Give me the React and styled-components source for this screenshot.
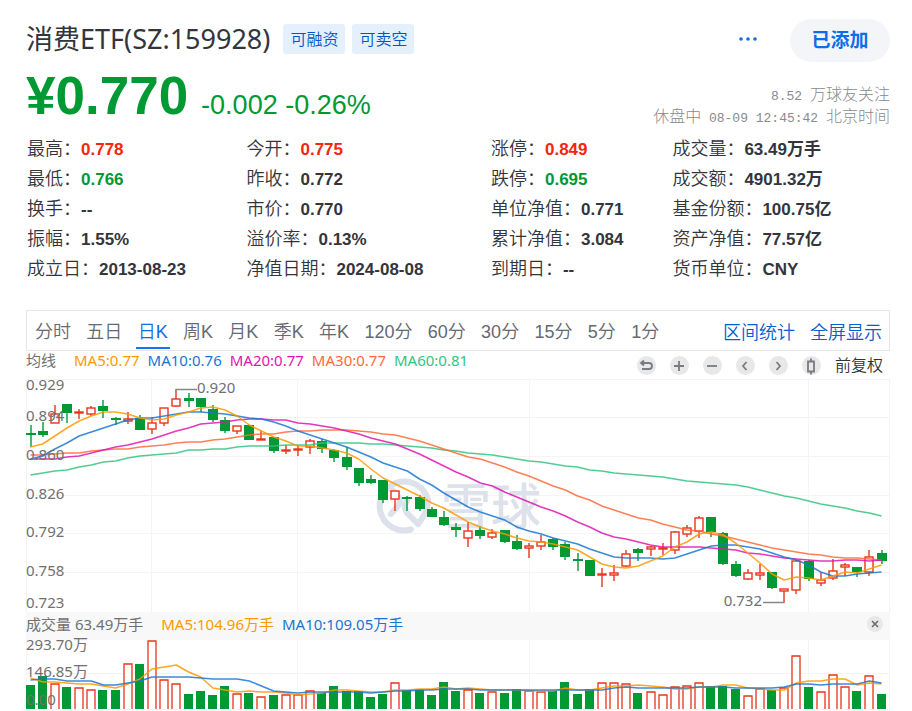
import { useState } from "react";
import styled, { createGlobalStyle } from "styled-components";

const GlobalStyle = createGlobalStyle`
  * {
    box-sizing: border-box;
  }
  body {
    margin: 0;
    background: #fff;
    color: #33353c;
    font-family: "Liberation Sans", "Noto Sans CJK SC", sans-serif;
  }
  button {
    border: none;
    background: none;
    padding: 0;
    font: inherit;
    color: inherit;
    cursor: pointer;
  }
`;

const uiFont = `"Noto Sans", "Noto Sans CJK SC", sans-serif`;
const UP = "#e8341a";
const DOWN = "#093";

const Page = styled.main`
  padding: 19px 22px 0 26px;
`;

const Header = styled.header`
  display: flex;
  align-items: center;
  height: 43px;
`;
const Title = styled.h1`
  margin: 0 13px 4px 0;
  font: 400 27px/36px ${uiFont};
  white-space: nowrap;
`;
const Tag = styled.a`
  margin: 0 7px 3px 0;
  padding: 0 7px;
  border-radius: 3px;
  background: #e4f0fb;
  color: #0055c4;
  font: 350 16px/30px ${uiFont};
  text-decoration: none;
  white-space: nowrap;
`;
const MoreButton = styled.button`
  display: flex;
  margin: 0 32px 4px auto;
`;
const FollowButton = styled.button`
  width: 100px;
  height: 43px;
  padding-bottom: 4px;
  border-radius: 22px;
  background: #f4f5f9;
  color: #0d6ee8;
  font-size: 19px;
  font-weight: 700;
`;

const PriceRow = styled.section`
  display: flex;
  justify-content: space-between;
  align-items: flex-end;
  height: 66px;
`;
const Price = styled.div`
  color: ${DOWN};
  font-size: 27px;
  line-height: 46px;
  white-space: nowrap;
  strong {
    margin-right: 13px;
    font-size: 53px;
  }
`;
const Meta = styled.div`
  padding-bottom: 2px;
  color: #8a8a8a;
  font: 300 16px/22px "Noto Sans CJK SC", sans-serif;
  text-align: right;
  span {
    font: 13px/1 "Liberation Mono", monospace;
  }
`;

const QuoteTable = styled.table`
  width: 100%;
  margin: 6px 0 26px;
  border-collapse: collapse;
  table-layout: fixed;
`;
const QuoteCell = styled.td`
  width: ${({ $width }) => $width};
  height: 30px;
  padding: 0 0 0 1px;
  font-size: 18px;
  font-weight: 350;
  line-height: 30px;
  white-space: nowrap;
  strong {
    color: ${({ $color }) => $color || "inherit"};
    font-size: 17px;
    font-weight: 700;
    line-height: 1;
  }
`;

const Tabs = styled.nav`
  display: flex;
  align-items: center;
  justify-content: space-between;
  height: 41px;
  padding: 0 7px 0 6px;
  border: 1px solid #e6e6e8;
`;
const PeriodList = styled.div`
  display: flex;
  justify-content: space-between;
  flex: 0 0 74%;
`;
const Tab = styled.button`
  height: 37px;
  padding: 0 2px;
  border-bottom: 2px solid ${({ $active }) => ($active ? "#1a76e8" : "transparent")};
  color: ${({ $active }) => ($active ? "#0d6ee8" : "#666970")};
  font-size: 18px;
  font-weight: 350;
  white-space: nowrap;
`;
const TabLinks = styled.div`
  display: flex;
  gap: 15px;
  a {
    color: #0060d0;
    font-size: 18px;
    font-weight: 350;
    text-decoration: none;
    white-space: nowrap;
  }
`;

const Toolbar = styled.div`
  display: flex;
  justify-content: space-between;
  height: 21px;
`;
const Legend = styled.div`
  display: flex;
  gap: 8px;
  color: #707070;
  font: 400 15px/18px ${uiFont};
  white-space: nowrap;
`;
const LegendTitle = styled.span`
  margin-right: 10px;
`;
const LegendItem = styled.span`
  color: ${({ $color }) => $color};
`;
const Tools = styled.div`
  display: flex;
  align-items: flex-start;
  gap: 14px;
  padding: 5px 7px 0 0;
`;
const RoundButton = styled.button`
  display: flex;
  align-items: center;
  justify-content: center;
  width: ${({ $size }) => $size || 19}px;
  height: ${({ $size }) => $size || 19}px;
  border-radius: 50%;
  background: #e8e8e8;
`;
const AdjustButton = styled.button`
  color: #333;
  font-size: 16px;
  font-weight: 350;
  line-height: 20px;
  white-space: nowrap;
`;

const Chart = styled.svg`
  display: block;
  width: 100%;
  height: auto;
  overflow: visible;
  text {
    fill: #707070;
    font: 400 15px ${uiFont};
  }
  .brand {
    fill: #dde1ea;
    font-size: 50px;
    font-weight: 500;
  }
`;
const VolumeBar = styled.div`
  display: flex;
  align-items: center;
  justify-content: space-between;
  height: 28px;
  padding: 0 7px 4px 0;
  background: #f8f8f8;
`;

const quotes = [
  [["最高", "0.778", "#f5260a"], ["今开", "0.775", "#f5260a"], ["涨停", "0.849", "#f5260a"], ["成交量", "63.49万手"]],
  [["最低", "0.766", DOWN], ["昨收", "0.772"], ["跌停", "0.695", DOWN], ["成交额", "4901.32万"]],
  [["换手", "--"], ["市价", "0.770"], ["单位净值", "0.771"], ["基金份额", "100.75亿"]],
  [["振幅", "1.55%"], ["溢价率", "0.13%"], ["累计净值", "3.084"], ["资产净值", "77.57亿"]],
  [["成立日", "2013-08-23"], ["净值日期", "2024-08-08"], ["到期日", "--"], ["货币单位", "CNY"]],
];
const columnWidths = ["25.4%", "28.3%", "21%", "25.3%"];

const periods = ["分时", "五日", "日K", "周K", "月K", "季K", "年K", "120分", "60分", "30分", "15分", "5分", "1分"];

const colors = {
  ma5: "#f90",
  ma10: "#1a75d1",
  ma20: "#e014b0",
  ma30: "#ff6a3a",
  ma60: "#33c480",
};

// direction, body top, body bottom, high, low (chart units)
const candles = [
  ["d", 433, 435, 425, 447], ["d", 431, 435, 422, 437], ["u", 414, 423, 405, 423], ["d", 404, 413, 404, 423],
  ["u", 412, 413, 409, 419], ["u", 408, 414, 406, 416], ["d", 406, 411, 400, 418], ["d", 418, 420, 417, 425],
  ["u", 419, 421, 412, 424], ["d", 418, 430, 415, 430], ["u", 423, 429, 417, 434], ["u", 408, 423, 408, 426],
  ["u", 399, 406, 389, 407], ["d", 398, 401, 393, 407], ["d", 398, 407, 398, 412], ["d", 409, 420, 405, 422],
  ["d", 420, 431, 417, 433], ["u", 426, 431, 426, 434], ["d", 425, 440, 425, 440], ["u", 439, 440, 431, 440],
  ["d", 437, 451, 437, 453], ["u", 450, 451, 445, 454], ["u", 449, 450, 445, 456], ["u", 441, 447, 439, 454],
  ["d", 441, 449, 439, 453], ["d", 450, 458, 449, 462], ["d", 457, 467, 447, 470], ["d", 468, 483, 468, 486],
  ["d", 479, 483, 475, 484], ["d", 480, 500, 480, 503], ["u", 491, 499, 491, 511], ["d", 497, 499, 496, 511],
  ["d", 497, 509, 495, 511], ["d", 509, 517, 507, 517], ["d", 517, 525, 511, 526], ["d", 527, 530, 523, 537],
  ["u", 531, 538, 522, 547], ["d", 530, 536, 526, 539], ["u", 533, 537, 529, 539], ["d", 530, 542, 530, 543],
  ["d", 541, 549, 535, 550], ["u", 546, 548, 543, 558], ["u", 542, 546, 535, 550], ["d", 539, 547, 538, 550],
  ["d", 544, 557, 542, 560], ["d", 559, 561, 553, 571], ["d", 560, 576, 560, 576], ["u", 574, 575, 568, 587],
  ["u", 573, 575, 565, 581], ["u", 554, 566, 550, 567], ["d", 549, 553, 548, 561], ["u", 547, 549, 546, 556],
  ["u", 548, 549, 543, 555], ["u", 532, 550, 531, 554], ["u", 528, 534, 525, 537], ["u", 518, 531, 516, 538],
  ["d", 517, 532, 517, 537], ["d", 533, 564, 532, 565], ["d", 564, 576, 561, 577], ["u", 573, 579, 569, 580],
  ["u", 573, 575, 564, 580], ["d", 572, 588, 572, 589], ["u", 589, 591, 589, 603], ["u", 561, 590, 560, 594],
  ["d", 561, 579, 560, 581], ["u", 580, 583, 572, 586], ["u", 571, 578, 559, 580], ["u", 565, 567, 563, 576],
  ["d", 567, 572, 567, 577], ["u", 557, 572, 550, 576], ["d", 553, 561, 550, 564],
];

const priceLines = {
  ma60: [475, 473, 471, 470, 467, 465, 462, 461, 458, 456, 455, 454, 453, 450, 450, 449, 449, 447, 446, 446, 446, 445, 445, 445, 443, 443, 443, 443, 444, 444, 445, 446, 447, 448, 450, 451, 453, 454, 455, 457, 459, 461, 462, 464, 466, 467, 470, 471, 473, 474, 475, 476, 477, 479, 481, 482, 483, 484, 485, 487, 490, 493, 496, 498, 501, 504, 506, 508, 511, 513, 516],
  ma30: [455, 455, 454, 453, 453, 451, 450, 449, 449, 447, 446, 445, 443, 442, 442, 440, 439, 437, 435, 434, 434, 432, 431, 431, 430, 430, 430, 431, 432, 434, 435, 438, 441, 445, 449, 453, 457, 459, 463, 467, 472, 476, 481, 486, 490, 496, 500, 506, 510, 514, 518, 520, 524, 527, 530, 531, 534, 536, 539, 542, 545, 548, 550, 552, 554, 555, 557, 558, 558, 559, 560],
  ma20: [459, 459, 459, 457, 456, 453, 450, 447, 445, 442, 439, 435, 431, 428, 424, 423, 422, 420, 419, 419, 420, 420, 423, 424, 426, 428, 431, 434, 438, 441, 444, 449, 454, 460, 466, 472, 477, 483, 486, 492, 497, 502, 507, 511, 516, 522, 527, 533, 537, 539, 542, 545, 547, 547, 547, 547, 548, 549, 550, 553, 554, 556, 558, 559, 560, 561, 561, 560, 560, 561, 560],
  ma10: [459, 456, 449, 443, 436, 432, 428, 424, 420, 418, 418, 416, 414, 412, 412, 413, 414, 416, 418, 419, 422, 426, 431, 435, 439, 443, 447, 452, 457, 463, 467, 471, 479, 485, 493, 500, 507, 512, 516, 520, 527, 531, 534, 538, 541, 544, 549, 553, 557, 558, 558, 558, 559, 558, 554, 550, 546, 545, 545, 547, 549, 553, 557, 560, 565, 572, 576, 576, 574, 573, 572],
  ma5: [447, 444, 436, 428, 421, 416, 412, 412, 414, 418, 420, 419, 415, 412, 408, 407, 410, 416, 425, 431, 437, 441, 446, 446, 448, 450, 453, 459, 469, 478, 484, 490, 496, 503, 508, 515, 522, 527, 531, 534, 538, 541, 542, 544, 547, 550, 557, 564, 567, 568, 566, 561, 556, 547, 542, 534, 532, 535, 543, 553, 563, 574, 580, 577, 578, 580, 576, 572, 573, 569, 565],
};

const volumes = [
  685, 676, 684, 687, 688, 690, 690, 690, 664, 664, 641, 680, 684, 694, 691, 695, 686, 694, 693, 697, 695, 695, 695, 691,
  693, 686, 691, 691, 697, 694, 683, 690, 690, 695, 682, 691, 690, 693, 692, 693, 689, 691, 692, 691, 682, 694, 689, 683,
  683, 684, 693, 692, 695, 687, 686, 683, 686, 686, 689, 696, 689, 690, 688, 656, 687, 692, 675, 687, 691, 676, 694,
];

const volumeLines = {
  ma5: [678, 682, 682, 683, 684, 684, 686, 688, 684, 679, 669, 667, 665, 672, 677, 688, 690, 692, 691, 692, 692, 693, 695, 694, 693, 690, 690, 691, 692, 692, 690, 690, 689, 689, 687, 689, 688, 689, 690, 690, 690, 691, 691, 691, 688, 690, 690, 688, 686, 686, 685, 686, 687, 689, 689, 687, 687, 685, 685, 688, 689, 690, 690, 683, 681, 681, 679, 679, 685, 683, 684],
  ma10: [680, 679, 679, 681, 681, 681, 685, 685, 683, 681, 677, 677, 677, 677, 678, 679, 679, 679, 681, 686, 691, 692, 693, 692, 692, 692, 692, 692, 693, 692, 691, 691, 690, 690, 689, 689, 689, 690, 690, 690, 690, 690, 690, 690, 690, 690, 690, 690, 688, 687, 688, 688, 688, 688, 688, 687, 687, 687, 688, 688, 688, 688, 687, 684, 684, 685, 684, 684, 684, 681, 683],
};

const priceTicks = [["0.929", 390], ["0.894", 421], ["0.860", 460], ["0.826", 499], ["0.792", 537], ["0.758", 576], ["0.723", 608]];
const monthLines = [151, 297, 529, 808];

const xOf = (i) => 30.5 + (i * 851) / 70;
const toPoints = (values) => values.map((y, i) => `${xOf(i)},${y}`).join(" ");

function Candle({ index, data }) {
  const [dir, top, bottom, high, low] = data;
  const x = Math.round(xOf(index));
  const color = dir === "u" ? UP : DOWN;
  return (
    <g stroke={color} strokeWidth="1.4">
      <line x1={x} x2={x} y1={high} y2={low} />
      {dir === "u" ? (
        <rect x={x - 4} y={top} width="8" height={bottom - top} fill="#fff" />
      ) : (
        <rect x={x - 5} y={top} width="10" height={bottom - top} fill={color} stroke="none" />
      )}
    </g>
  );
}

function Volume({ index, top }) {
  const x = Math.round(xOf(index));
  return candles[index][0] === "u" ? (
    <path d={`M${x - 4} 709V${top}h8V709`} fill="#fff" stroke={UP} strokeWidth="1.3" />
  ) : (
    <rect x={x - 5} y={top} width="9" height={709 - top} fill={DOWN} />
  );
}

function Lines({ lines }) {
  return Object.entries(lines).map(([key, values]) => (
    <polyline
      key={key}
      points={toPoints(values)}
      fill="none"
      stroke={colors[key]}
      strokeWidth="1.5"
      strokeOpacity="0.85"
      strokeLinejoin="round"
    />
  ));
}

function PriceChart() {
  return (
    <Chart viewBox="26 372 864 240" role="img" aria-label="日K">
      <g stroke="#f4f4f4">
        {[379.5, 417.5, 456.5, 495.5, 533.5, 572.5].map((y) => (
          <line key={y} x1="26" x2="890" y1={y} y2={y} />
        ))}
        {[26, ...monthLines, 889].map((x) => (
          <line key={x} x1={x + 0.5} x2={x + 0.5} y1="379" y2="612" />
        ))}
      </g>
      <g fill="none" stroke="#dde1ea" strokeWidth="6" strokeLinecap="round">
        <path d="M411 529.500A24.500 24.500 0 1 1 428 500C428 510 423 518 418 524L407 513" strokeLinejoin="round" />
        <path d="M388 487C397 493 402 499 399 504C397 508 394 510 391 514" />
        <path d="M407 513C404 509 404 505 407 501" />
      </g>
      <text className="brand" x="441" y="525">
        雪球
      </text>
      {candles.map((c, i) => (
        <Candle key={i} index={i} data={c} />
      ))}
      <Lines lines={priceLines} />
      {priceTicks.map(([label, y]) => (
        <text key={label} x="26" y={y}>
          {label}
        </text>
      ))}
      <path d="M176 389.500H197M763 602.500H784" stroke="#888" strokeWidth="1.3" />
      <text x="197" y="393">0.920</text>
      <text x="762" y="606" textAnchor="end">0.732</text>
    </Chart>
  );
}

function VolumeChart() {
  return (
    <Chart viewBox="26 640 864 70" role="img" aria-label="成交量">
      <g stroke="#f4f4f4">
        <line x1="26" x2="890" y1="673.500" y2="673.500" />
        <line x1="26" x2="890" y1="709.500" y2="709.500" />
        {[26, ...monthLines, 889].map((x) => (
          <line key={x} x1={x + 0.5} x2={x + 0.5} y1="640" y2="709" />
        ))}
      </g>
      {volumes.map((top, i) => (
        <Volume key={i} index={i} top={top} />
      ))}
      <Lines lines={volumeLines} />
      <text x="26" y="650">293.70万</text>
      <text x="26" y="677">146.85万</text>
      <text x="26" y="705">0.00</text>
    </Chart>
  );
}

const toolIcons = [
  ["撤销", "M4 6h8a2.500 2.500 0 0 1 0 6H5M7 3.500L4 6l3 2.500"],
  ["放大", "M4 9h10M9 4v10"],
  ["缩小", "M4 9h10"],
  ["左移", "M10.500 5L7 9l3.500 4"],
  ["右移", "M7.500 5L11 9l-3.500 4"],
  ["K线样式", "M6 4.500h6v10H6zM9 1.500v3M9 14.500v3"],
];

function App() {
  const [period, setPeriod] = useState("日K");
  return (
    <>
      <GlobalStyle />
      <Page>
        <Header>
          <Title>消费ETF(SZ:159928)</Title>
          <Tag href="#margin">可融资</Tag>
          <Tag href="#short">可卖空</Tag>
          <MoreButton aria-label="更多">
            <svg width="20" height="10" fill="#0d6ee8">
              <circle cx="3" cy="5" r="1.800" />
              <circle cx="10" cy="5" r="1.800" />
              <circle cx="17" cy="5" r="1.800" />
            </svg>
          </MoreButton>
          <FollowButton>已添加</FollowButton>
        </Header>
        <PriceRow>
          <Price>
            <strong>¥0.770</strong>
            -0.002 -0.26%
          </Price>
          <Meta>
            <div>
              <span>8.52 </span>万球友关注
            </div>
            <div>
              休盘中<span> 08-09 12:45:42 </span>北京时间
            </div>
          </Meta>
        </PriceRow>
        <QuoteTable>
          <tbody>
            {quotes.map((row) => (
              <tr key={row[0][0]}>
                {row.map(([label, value, color], i) => (
                  <QuoteCell key={label} $color={color} $width={columnWidths[i]}>
                    {label}：<strong>{value}</strong>
                  </QuoteCell>
                ))}
              </tr>
            ))}
          </tbody>
        </QuoteTable>
        <Tabs>
          <PeriodList>
            {periods.map((name) => (
              <Tab key={name} $active={name === period} onClick={() => setPeriod(name)}>
                {name}
              </Tab>
            ))}
          </PeriodList>
          <TabLinks>
            <a href="#stats">区间统计</a>
            <a href="#fullscreen">全屏显示</a>
          </TabLinks>
        </Tabs>
        <Toolbar>
          <Legend>
            <LegendTitle>均线</LegendTitle>
            <LegendItem $color={colors.ma5}>MA5:0.77</LegendItem>
            <LegendItem $color={colors.ma10}>MA10:0.76</LegendItem>
            <LegendItem $color={colors.ma20}>MA20:0.77</LegendItem>
            <LegendItem $color={colors.ma30}>MA30:0.77</LegendItem>
            <LegendItem $color={colors.ma60}>MA60:0.81</LegendItem>
          </Legend>
          <Tools>
            {toolIcons.map(([label, d]) => (
              <RoundButton key={label} aria-label={label}>
                <svg width="18" height="18" fill="none" stroke="#777c82" strokeWidth="1.800">
                  <path d={d} />
                </svg>
              </RoundButton>
            ))}
            <AdjustButton>前复权</AdjustButton>
          </Tools>
        </Toolbar>
        <PriceChart />
        <VolumeBar>
          <Legend>
            <LegendTitle>成交量 63.49万手</LegendTitle>
            <LegendItem $color={colors.ma5}>MA5:104.96万手</LegendItem>
            <LegendItem $color={colors.ma10}>MA10:109.05万手</LegendItem>
          </Legend>
          <RoundButton $size={16} aria-label="关闭">
            <svg width="8" height="8" stroke="#666" strokeWidth="1.500">
              <path d="M1 1l6 6M7 1L1 7" />
            </svg>
          </RoundButton>
        </VolumeBar>
        <VolumeChart />
      </Page>
    </>
  );
}

export default App;
